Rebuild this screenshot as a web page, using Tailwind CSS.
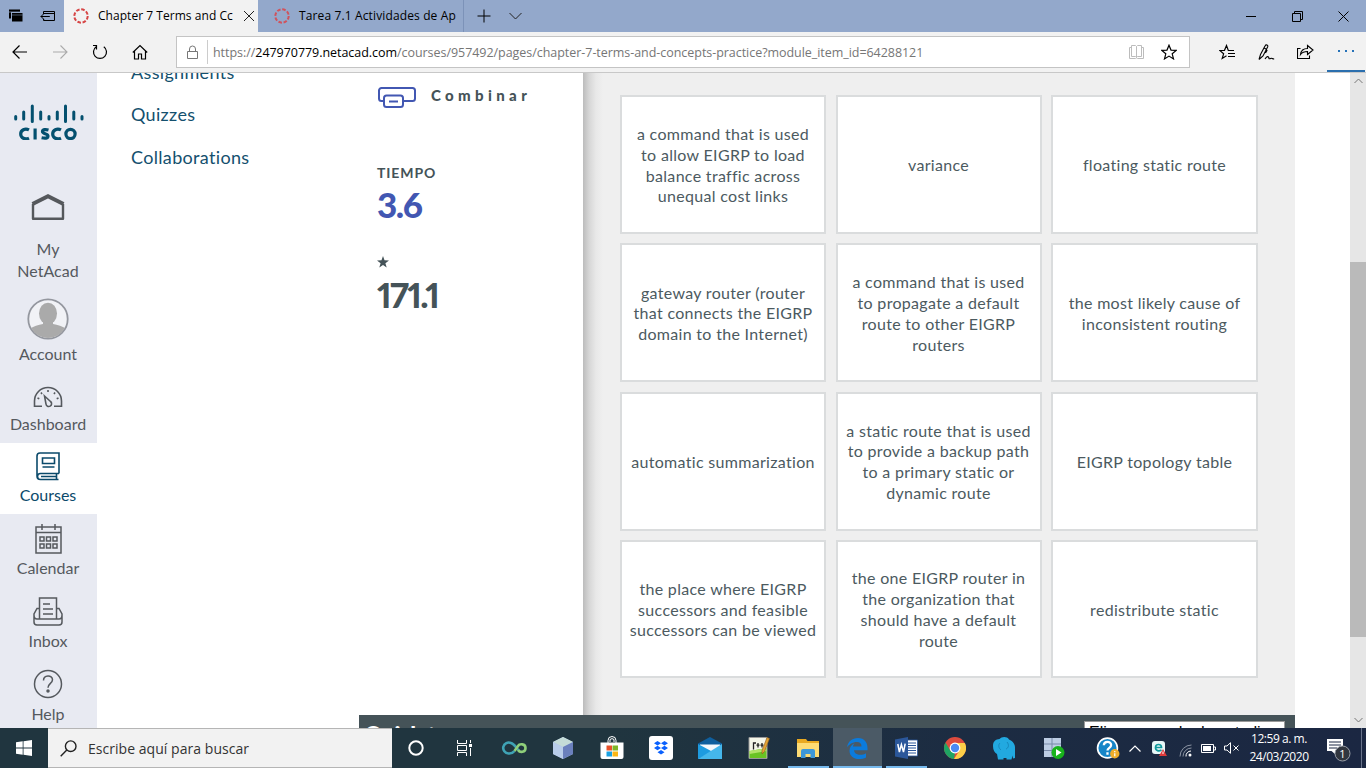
<!DOCTYPE html>
<html lang="es">
<head>
<meta charset="utf-8">
<title>Chapter 7 Terms and Concepts Practice</title>
<script src="https://cdn.jsdelivr.net/npm/@tailwindcss/browser@4"></script>
</head>
<body class="w-[1366px] h-[768px] overflow-hidden flex flex-col bg-white font-['Open_Sans',sans-serif]">

<!-- Tab strip -->
<header class="h-8 shrink-0 flex bg-[#93a8cb] text-xs text-black">
  <div class="w-16 flex items-center shrink-0">
    <svg class="ml-2 w-4 h-4" viewBox="0 0 16 16"><path d="M1 1.500h11v9H1z" fill="#000"/><path d="M1 4h11" stroke="#93a8cb" stroke-width=".7"/><rect x="3.500" y="4.500" width="11.500" height="9.500" fill="#000" stroke="#93a8cb"/><path d="M4 7h10.500" stroke="#93a8cb" stroke-width=".5"/></svg>
    <svg class="ml-4 w-4 h-4" viewBox="0 0 16 16" fill="none" stroke="#000"><path d="M3.500 6V3.500h11v9h-11V11M3.500 5.500h11M.8 8.500h9M4 5.500l-3 3 3 3"/></svg>
  </div>
  <div class="w-[194px] shrink-0 bg-[#f2f2f2] flex items-center">
    <svg class="ml-[9px] w-4 h-4 shrink-0" viewBox="0 0 16 16" fill="none" stroke="#d64545"><circle cx="8" cy="8" r="6.700" stroke-width="2" stroke-dasharray="3.600 1.660"/></svg>
    <span class="ml-[9px] w-[138px] whitespace-nowrap tracking-[0.04px]">Chapter 7 Terms and Cc</span>
    <svg class="ml-[7px] w-3 h-3" viewBox="0 0 12 12" stroke="#222" fill="none"><path d="M1 1l10 10M11 1L1 11"/></svg>
  </div>
  <div class="w-[206px] shrink-0 flex items-center border-r border-[#7c92b8]">
    <svg class="ml-4 w-4 h-4 shrink-0" viewBox="0 0 16 16" fill="none" stroke="#d0525c"><circle cx="8" cy="8" r="6.700" stroke-width="2" stroke-dasharray="3.600 1.660"/></svg>
    <span class="ml-[9px] whitespace-nowrap tracking-[0.13px]">Tarea 7.1 Actividades de Ap</span>
  </div>
  <div class="flex items-center">
    <svg class="ml-[13px] w-[14px] h-[14px]" viewBox="0 0 14 14" stroke="#000"><path d="M7 .5v13M.5 7h13"/></svg>
    <svg class="ml-[18px] w-[13px] h-[8px]" viewBox="0 0 13 8" fill="none" stroke="#222"><path d="M.5 1l6 6 6-6"/></svg>
  </div>
  <div class="ml-auto flex items-center gap-[35px] pr-[17px]">
    <svg class="w-[11px] h-[11px]" viewBox="0 0 11 11" stroke="#000"><path d="M0 5.500h10"/></svg>
    <svg class="w-[11px] h-[11px]" viewBox="0 0 11 11" fill="none" stroke="#000"><path d="M.5 2.500h8v8h-8zM2.500 2.500v-2h8v8h-2"/></svg>
    <svg class="w-[11px] h-[11px]" viewBox="0 0 11 11" stroke="#000"><path d="M.5.5l10 10M10.500.5l-10 10"/></svg>
  </div>
</header>

<!-- Address bar -->
<div class="h-[41px] shrink-0 flex items-center bg-[#f2f2f2] border-b border-[#c8c8c8]">
  <svg class="ml-3 w-4 h-4" viewBox="0 0 16 16" fill="none" stroke="#000" stroke-width="1.200"><path d="M15 8H1M7.500 1.500L1 8l6.500 6.500"/></svg>
  <svg class="ml-6 w-4 h-4" viewBox="0 0 16 16" fill="none" stroke="#aaa" stroke-width="1.100"><path d="M1 8h14M8.500 1.500L15 8l-6.500 6.500"/></svg>
  <svg class="ml-6 w-4 h-4 overflow-visible" viewBox="0 0 16 16" fill="none" stroke="#000" stroke-width="1.200"><path d="M4.200 2.700a6.500 6.500 0 1 0 7.600 0M4.500 5.500V1.500H1"/></svg>
  <svg class="ml-6 w-4 h-4" viewBox="0 0 16 16" fill="none" stroke="#000" stroke-width="1.200"><path d="M.8 8.500L8 1.500l7.200 7M2.500 7v8h4v-5h3v5h4V7"/></svg>
  <div class="ml-7 w-[1014px] h-[32px] shrink-0 bg-white border border-[#c4c4c4] flex items-center">
    <svg class="ml-[10px] w-[11px] h-[14px]" viewBox="0 0 11 14" fill="none" stroke="#777"><path d="M.5 6.500h10v7H.5zM2.500 6.500V4a3 3 0 0 1 6 0v2.500"/></svg>
    <span class="ml-[9px] w-px h-6 bg-[#ccc]"></span>
    <span class="ml-[5px] pt-[2px] text-[12.500px] whitespace-nowrap text-[#767676] tracking-[-0.045px]">https://<span class="text-black">247970779.netacad.com</span>/courses/957492/pages/chapter-7-terms-and-concepts-practice?module_item_id=64288121</span>
    <svg class="ml-auto w-[15px] h-[14px]" viewBox="0 0 15 14" fill="none" stroke="#bcbcbc"><path d="M2.500.5h4l1 1 1-1h4v11h-4l-1 1-1-1h-4zM7.500 1.500v11M2.500 2.500h-2v11h6l1-.6 1 .6h6v-11h-2"/></svg>
    <svg class="ml-[17px] mr-3 w-4 h-4" viewBox="0 0 16 16" fill="none" stroke="#000" stroke-width="1.200"><path d="M8 1.200l2 4.900 5.200.3-4 3.400 1.300 5.100L8 12.100l-4.500 2.800 1.300-5.100-4-3.400 5.200-.3z"/></svg>
  </div>
  <svg class="ml-[29px] w-4 h-4" viewBox="0 0 16 16" fill="none" stroke="#000" stroke-width="1.200"><path d="M15 6.500H9.300L7.500 1.500 5.500 6.300.8 6.500l3.800 3.300L3.200 14.500l4.300-2.700M9 9.500h7M9 12.500h7"/></svg>
  <svg class="ml-[23px] w-[17px] h-[17px]" viewBox="0 0 17 17" fill="none" stroke="#000" stroke-width="1.100"><path d="M1 15.500l1.500-5L7 2c1-2 3.500-1 2.600 1L5 12l-4 3.500M6 4l2 1M8 5l1 1.500L7.500 9M7 15c2-3 3.500-3 3.800-1 .4 1.500 1.600.5 2.400.2 1-.2 1 .8 3 .8"/></svg>
  <svg class="ml-[22px] w-[17px] h-4" viewBox="0 0 17 16" fill="none" stroke="#000" stroke-width="1.100"><path d="M3.500 4.500h-3v10h12v-3M3.500 10.500C4 6.500 6.500 4.500 10.500 4.500v-3L16 6l-5.500 4.500v-3c-3.500 0-5.500 1-7 3z"/></svg>
  <div class="ml-auto mr-px w-[38px] h-[39px] border-b-2 border-[#2b6fae] flex items-center justify-center gap-[5px]"><i class="w-[2px] h-[2px] bg-[#2672b8]"></i><i class="w-[2px] h-[2px] bg-[#2672b8]"></i><i class="w-[2px] h-[2px] bg-[#2672b8]"></i></div>
</div>

<!-- Page -->
<main class="h-[655px] shrink-0 flex overflow-hidden">
  <nav class="w-[97px] shrink-0 pr-px bg-[#e8eaf2] font-['Lato',sans-serif] text-base leading-[22px] text-[#55595e] text-center flex flex-col">
    <div class="h-[114px] pt-[31px] pl-[2px] flex flex-col items-center">
      <svg class="w-[70px] h-9" viewBox="0 0 70 36"><g stroke="#04506f" stroke-width="3" stroke-linecap="round"><path d="M1.700 12.500v2.500M9.700 8v7M18.300 2v15.500M26.700 8v7M35 12.500v2.500M43.300 8v7M51.500 2v15.500M59.800 8v7M68 12.500v2.500"/></g><g fill="none" stroke="#04506f" stroke-width="3.200"><path d="M15 25.900c-4-2-8.300.2-8.300 4.100s4.300 6 8.300 4.100M21.100 24.500v11M34.500 26c-3-.8-6-.6-6 1.600 0 2.600 5.500 1.500 5.500 4.500 0 2.400-3 2.400-6.400 1.700M47 25.900c-4-2-8.300.2-8.300 4.100s4.300 6 8.300 4.100"/><circle cx="56.500" cy="30" r="4.600"/></g></svg>
    </div>
    <div class="h-[104px] pt-[6px] flex flex-col items-center">
      <svg class="w-[34px] h-7" viewBox="0 0 34 28" fill="none" stroke="#55585c"><path d="M2 11v14.800h30V11" stroke-width="2.400" stroke-linejoin="round"/><path d="M1.500 11L17 3.200 32.500 11" stroke-width="4"/></svg>
      <span class="mt-[17px] block">My<br>NetAcad</span>
    </div>
    <div class="h-[82px] pt-[7px] flex flex-col items-center">
      <svg class="w-[42px] h-[42px] shrink-0" viewBox="0 0 42 42"><defs><clipPath id="av"><circle cx="21" cy="21" r="19"/></clipPath></defs><circle cx="21" cy="21" r="19.700" fill="#f1f2f6" stroke="#94979f" stroke-width="1.800"/><g clip-path="url(#av)" fill="#aaa"><ellipse cx="21" cy="15.500" rx="9" ry="10.800"/><path d="M16 23h10v3c5 1 10 2 15 6v9H1v-9c5-4 10-5 15-6z"/></g></svg>
      <span class="mt-[3px] block">Account</span>
    </div>
    <div class="h-[70px] pt-[13px] flex flex-col items-center">
      <svg class="w-[30px] h-[22px]" viewBox="0 0 30 22" fill="none" stroke="#55595e" stroke-width="1.600"><path d="M9 20.300H1.500V15a13.500 13.500 0 0 1 27 0v5.300H21M11.500 10l6 5.500a2.800 2.800 0 1 1-4.500 2.500zM15 4v2M8 6.500l1 1.500M22 6.500L21 8M4.500 12l1.800.8M25.500 12l-1.800.8"/></svg>
      <span class="mt-[5px] block">Dashboard</span>
    </div>
    <div class="h-[71px] -mr-px pr-px pt-[9px] bg-white text-[#0b4a6b] flex flex-col items-center">
      <svg class="w-6 h-[29px]" viewBox="0 0 24 29" fill="none" stroke="#0b4a6b" stroke-width="1.600"><path d="M23 21.500V1H4C2 1 1 2 1 4v20c0 2.500 1.500 3.500 3.500 3.500h18M23 21.500H4.500c-4 0-4 6 0 6M20.500 21.500v6M5 24.500h15M6.500 6h12v5.500h-12zM6.500 15h12"/></svg>
      <span class="mt-[3px] block">Courses</span>
    </div>
    <div class="h-[73px] pt-[10px] flex flex-col items-center">
      <svg class="w-[27px] h-[30px]" viewBox="0 0 27 30" fill="none" stroke="#55595e" stroke-width="1.500"><path d="M1 3h25v26H1zM1 8.500h25M7 0v6M20 0v6M5 13h4v4H5zM11.500 13h4v4h-4zM18 13h4v4h-4zM5 20h4v4H5zM11.500 20h4v4h-4zM18 20h4v4h-4z"/></svg>
      <span class="mt-[3px] block">Calendar</span>
    </div>
    <div class="h-[73px] pt-[10px] flex flex-col items-center">
      <svg class="w-[30px] h-[29px]" viewBox="0 0 30 29" fill="none" stroke="#55595e" stroke-width="1.500"><path d="M6.500 22V1h17v21M10 7h7M10 12h10M10 17h10M6.500 11.500H4L1 17v8c0 2 1 3 3 3h22c2 0 3-1 3-3v-8l-3-5.500h-2.500M1 18c0 3 1 4 3 4h22c2 0 3-1 3-4"/></svg>
      <span class="mt-[4px] block">Inbox</span>
    </div>
    <div class="h-[68px] pt-[9px] flex flex-col items-center">
      <svg class="w-[30px] h-[30px]" viewBox="0 0 30 30" fill="none" stroke="#55595e" stroke-width="1.500"><circle cx="15" cy="15" r="13.500"/><path d="M10.500 11.500c0-6 9-6 9-.7 0 3.700-4.500 3.500-4.500 8"/><circle cx="15" cy="22" r="1" fill="#55595e"/></svg>
      <span class="mt-[4px] block">Help</span>
    </div>
  </nav>

  <aside class="w-[262px] shrink-0 pl-[34px] font-['Lato',sans-serif] text-lg leading-[43px] tracking-[0.33px] text-[#14506e] flex flex-col">
    <a class="-mt-[22px] h-[42px]">Assignments</a>
    <a>Quizzes</a>
    <a>Collaborations</a>
  </aside>

  <section class="w-[936px] shrink-0 flex flex-col">
    <div class="h-[642px] flex">
      <div class="w-[224px] shrink-0 pl-[18px] pt-[12px] font-['Lato',sans-serif] text-[#455358]">
        <div class="flex items-center h-5">
          <svg class="mt-[4px] w-[39px] h-[24px]" viewBox="0 0 39 24" fill="none" stroke="#4257b2" stroke-width="2"><path d="M6 16H4.500A2.500 2.500 0 0 1 2 13.500v-8A2.500 2.500 0 0 1 4.500 3h31A2.500 2.500 0 0 1 38 5.500v8a2.500 2.500 0 0 1-2.500 2.500H27"/><rect x="7" y="10.500" width="19" height="11.500" rx="2.500"/><path d="M12 16.500h9"/></svg>
          <span class="ml-[15px] text-[15px] font-black tracking-[4.350px]">Combinar</span>
        </div>
        <div class="mt-[58px] text-sm leading-[20px] font-bold tracking-[0.900px]">TIEMPO</div>
        <div class="text-[35px] leading-[42px] font-black text-[#4257b2] tracking-[-1.500px]">3.6</div>
        <svg class="mt-[31px] w-3 h-3" viewBox="0 0 12 12" fill="#455358"><path d="M6 0l1.500 4.200L12 4.400 8.400 7.200 9.700 11.500 6 9 2.300 11.500l1.300-4.300L0 4.400l4.500-.2z"/></svg>
        <div class="mt-[5px] text-[35px] leading-[42px] font-black proportional-nums tracking-[-1.700px]">171.1</div>
      </div>
      <div class="w-[712px] shrink-0 bg-[#efefef] bg-[linear-gradient(90deg,#bcbcbc_0px,#d6d6d6_6px,#e8e8e8_13px,#efefef_20px)] pl-[37px] pt-[22px]">
        <div class="w-[638px] h-[583px] grid grid-cols-[206px_206px_207px] grid-rows-[139px_139px_139px_138px] gap-x-[9.500px] gap-y-[9.330px] font-['Lato',sans-serif] text-[16px] leading-[20.800px] tracking-[0.31px] text-[#4c5a5f] text-center whitespace-nowrap [&>div]:bg-white [&>div]:border-2 [&>div]:border-[#dadcdd] [&>div]:flex [&>div]:items-center [&>div]:justify-center [&>div]:pt-[2px]">
          <div>a command that is used<br>to allow EIGRP to load<br>balance traffic across<br>unequal cost links</div>
          <div>variance</div>
          <div>floating static route</div>
          <div>gateway router (router<br>that connects the EIGRP<br>domain to the Internet)</div>
          <div>a command that is used<br>to propagate a default<br>route to other EIGRP<br>routers</div>
          <div>the most likely cause of<br>inconsistent routing</div>
          <div>automatic summarization</div>
          <div>a static route that is used<br>to provide a backup path<br>to a primary static or<br>dynamic route</div>
          <div>EIGRP topology table</div>
          <div>the place where EIGRP<br>successors and feasible<br>successors can be viewed</div>
          <div>the one EIGRP router in<br>the organization that<br>should have a default<br>route</div>
          <div>redistribute static</div>
        </div>
      </div>
    </div>
    <div class="h-[13px] bg-[#455358] flex justify-between overflow-hidden pl-[5px] pr-[10px]">
      <span class="mt-[5px] font-['Lato',sans-serif] font-black text-[23px] leading-[28px] tracking-[-0.5px] text-white">Quizlet</span>
      <div class="mt-[6px] w-[201px] h-7 pl-[4px] bg-white border border-[#999] font-['Liberation_Sans',sans-serif] text-base leading-[22px] text-black whitespace-nowrap">Elige un modo de estudio</div>
    </div>
  </section>

  <div class="w-[55px] shrink-0"></div>
  <div class="w-4 shrink-0 bg-[#e6e6e6] flex flex-col items-center justify-between py-[5px]">
    <svg class="w-[9px] h-[6px]" viewBox="0 0 9 6" fill="none" stroke="#777"><path d="M.5 5l4-4 4 4"/></svg>
    <div class="mt-[98px] w-4 h-[375px] bg-[#bababa]"></div>
    <svg class="w-[9px] h-[6px]" viewBox="0 0 9 6" fill="none" stroke="#777"><path d="M.5 1l4 4 4-4"/></svg>
  </div>
</main>

<!-- Taskbar -->
<footer class="h-10 shrink-0 flex bg-[linear-gradient(90deg,#20353f_0%,#20353f_45%,#1c2c42_70%,#1b2742_100%)] text-white">
  <div class="w-12 shrink-0 flex items-center justify-center">
    <svg class="w-4 h-4" viewBox="0 0 16 16" fill="#fff"><path d="M0 2.300l6.700-1v6.300H0zM7.500 1.200L16 0v7.600H7.500zM0 8.400h6.700v6.300L0 13.700zM7.500 8.400H16V16l-8.500-1.200z"/></svg>
  </div>
  <div class="w-[344px] shrink-0 bg-[#f2f2f2] border-y border-[#b5b5b5] flex items-center">
    <svg class="ml-3 w-[17px] h-[17px]" viewBox="0 0 17 17" fill="none" stroke="#222" stroke-width="1.400"><circle cx="10.700" cy="6.200" r="5.300"/><path d="M6.800 10L.7 16.200"/></svg>
    <span class="ml-[11px] pt-px text-sm text-[#333] whitespace-nowrap tracking-[0.04px]">Escribe aquí para buscar</span>
  </div>
  <div class="-ml-px flex [&>div]:w-[49.100px] [&>div]:h-10 [&>div]:flex [&>div]:items-center [&>div]:justify-center">
    <div><svg class="w-4 h-4" viewBox="0 0 16 16"><circle cx="8" cy="8" r="6.700" fill="none" stroke="#fff" stroke-width="2"/></svg></div>
    <div><svg class="w-[17px] h-4" viewBox="0 0 17 16" fill="none" stroke="#fff"><path d="M1.500 0v3.500h9V0M1.500 5.500h9v5h-9zM1.500 16v-3.500h9V16M14.500 0v3M14.500 8v8"/><path d="M13 4h3v3h-3z" fill="#fff" stroke="none"/></svg></div>
    <div><svg class="w-[26px] h-[14px]" viewBox="0 0 26 14" fill="none" stroke-width="2.600"><path d="M13.500 10C11.500 12.500 9.500 12.700 7.500 12.500A5.500 5.500 0 1 1 10 2c3.500.8 5 5 8 7.500" stroke="#3fa3b5"/><path d="M17 9c2 3 7.500 2.500 7.500-2S18.500 2.500 17 5l-3.500 5" stroke="#8fcf7a"/></svg></div>
    <div><svg class="w-[22px] h-[22px]" viewBox="0 0 22 22"><path d="M11 0l10 5v12l-10 5-10-5V5z" fill="#aebfe2"/><path d="M11 0l10 5-10 5L1 5z" fill="#c5dcd8"/><path d="M11 10l10-5v12l-10 5z" fill="#6b80bd"/><path d="M1 5l10 5v12L1 17z" fill="#b9cdea"/></svg></div>
    <div><svg class="w-6 h-6" viewBox="0 0 24 24"><path d="M.5 6.500h23V21a2 2 0 0 1-2 2h-19a2 2 0 0 1-2-2z" fill="#fff"/><path d="M8 7V4.500a4 4 0 0 1 8 0V7M10 6V3.500a3 3 0 0 1 4 0V6" fill="none" stroke="#fff"/><path d="M6.500 9.500H12v5H6.500z" fill="#e8512a"/><path d="M12.500 9.500H18v5h-5.500z" fill="#7fb528"/><path d="M6.500 15.500H12v5H6.500z" fill="#1aa1e2"/><path d="M12.500 15.500H18v5h-5.500z" fill="#fbb615"/></svg></div>
    <div><svg class="w-6 h-6" viewBox="0 0 24 24"><rect width="24" height="24" rx="3" fill="#fff"/><path d="M8.500 5L12 7.300 8.500 9.600 5 7.300zM15.500 5L19 7.300l-3.500 2.300L12 7.300zM8.500 9.800L12 12l-3.500 2.300L5 12zM15.500 9.800L19 12l-3.500 2.300L12 12zM12 14l3.500 2.300L12 18.600l-3.500-2.300z" fill="#0a61fe"/></svg></div>
    <div><svg class="w-6 h-[22px]" viewBox="0 0 24 22"><path d="M0 6.500L12 0l12 6.500V22H0z" fill="#0f5f9e"/><path d="M2 7.500h20V15L12 20 2 14z" fill="#f4f8fc"/><path d="M0 7l14 7.500L0 22z" fill="#1d9be0"/><path d="M24 7v15H0z" fill="#45b7ec"/></svg></div>
    <div><svg class="w-6 h-6" viewBox="0 0 24 24"><path d="M2 1.500h18v21H2z" fill="#f4f6e8" stroke="#999"/><path d="M2.500 15l17-3v10h-17z" fill="#69c324"/><path d="M2.500 15l17-3v3l-17 3z" fill="#b3e36b"/><path d="M6.500 13.500V7H9M11 7v4.500M9.500 9.200h3M15 7v4.500M13.500 9.200h3" stroke="#222" fill="none" stroke-width="1.300"/><path d="M20 1.500l2.500 1-5 13-2.500 2.500v-3.500z" fill="#e3a335" stroke="#8b5c1d" stroke-width=".6"/></svg></div>
    <div class="border-b-2 border-[#76b9ed] pt-[2px] mx-1 w-[41px]!"><svg class="w-[22px] h-[19px]" viewBox="0 0 22 19"><path d="M0 0h9l1.500 2H22v16H0z" fill="#e9a921"/><path d="M0 4h22v14H0z" fill="#fddb74"/><path d="M4 19v-7a2 2 0 0 1 2-2h10a2 2 0 0 1 2 2v7h-4.500v-4h-5v4z" fill="#3d97d8"/></svg></div>
    <div class="border-b-2 border-[#76b9ed] bg-[#4b5a66] pt-[2px]"><svg class="w-[21px] h-[21px]" viewBox="0 0 21 21"><path d="M0 9.500C1 3.500 5 0 11 0c6.500 0 9.500 4.500 9.500 10v2.300H7c.3 3 3 4.500 6 4.500 2.500 0 4.500-.7 6-1.600v4.200c-2 1.100-4.500 1.600-7 1.600-5.500 0-9.500-3.300-9.500-8.300 0-3.400 2-6.200 5-7.500-1 1.200-1.400 2.400-1.500 3.400h8.500c0-3-1.500-4.500-4.500-4.500-4.500 0-8 2.500-10 5.400z" fill="#0b7bdc"/></svg></div>
    <div class="border-b-2 border-[#76b9ed] pt-[2px] mx-1 w-[41px]!"><svg class="w-[23px] h-[22px]" viewBox="0 0 23 22"><path d="M11 3h11.500v16H11z" fill="#fff" stroke="#2b579a" stroke-width=".8"/><path d="M13 6h8M13 8.500h8M13 11h8M13 13.500h8M13 16h8" stroke="#2b579a"/><path d="M0 2.500L13 0v22L0 19.500z" fill="#2b579a"/><path d="M2.800 7l1.600 8 2-7.500L8.500 15l1.700-8.300" fill="none" stroke="#fff" stroke-width="1.500"/></svg></div>
    <div><svg class="w-[22px] h-[22px]" viewBox="0 0 22 22"><circle cx="11" cy="11" r="11" fill="#dd4b3e"/><path d="M1.500 5.500L6.500 14 11 16l-1 6A11 11 0 0 1 1.500 5.500z" fill="#1fa463"/><path d="M11 6h9.800A11 11 0 0 1 10 22l5.500-8.500z" fill="#fdcf48"/><circle cx="11" cy="11" r="5.400" fill="#fff"/><circle cx="11" cy="11" r="4.200" fill="#4a8af4"/></svg></div>
    <div><svg class="w-6 h-6" viewBox="0 0 24 24" fill="#22a9e0"><path d="M1 10C1 5 4 3.500 7.500 3 9.500.5 15 0 17 3.500 21 5 23.500 8.500 23 13v9l-2 .5-.5-3-1 4h-5V22h-3v1.500H6L5 18c-2.500-1.500-4-4-4-8z"/><path d="M8 7c-2 2-1.500 5 1 7M15 6c2.500 3 1.500 6-1 7" fill="none" stroke="#1687bb"/></svg></div>
    <div><svg class="w-[22px] h-[22px]" viewBox="0 0 22 22"><path d="M1 1h17v19H1z" fill="#bccce3"/><path d="M1 7h17M1 13.500h17M9 1v19" stroke="#7889a8"/><circle cx="15" cy="15.500" r="6.500" fill="#18b31b"/><path d="M13 12l5.500 3.500L13 19z" fill="#fff"/></svg></div>
  </div>
  <div class="ml-auto flex items-center shrink-0">
    <svg class="w-[24px] h-[23px]" viewBox="0 0 23 22"><circle cx="11" cy="10.500" r="9.500" fill="#1685c7" stroke="#fff" stroke-width="1.600"/><path d="M7.500 8c0-4.500 7-4.500 7-.3 0 2.800-3.500 2.500-3.500 5.300M11 14.700v2.300" fill="none" stroke="#fff" stroke-width="2.200"/><circle cx="18" cy="16" r="4.500" fill="#f0ad29"/><path d="M18 13.500v1M18 15.500v3" stroke="#fff" stroke-width="1.200"/></svg>
    <svg class="ml-[9px] w-3 h-[7px]" viewBox="0 0 12 7" fill="none" stroke="#fff" stroke-width="1.200"><path d="M.5 6.500L6 1l5.500 5.500"/></svg>
    <svg class="ml-[11px] w-[15px] h-[15px]" viewBox="0 0 15 15"><rect width="13" height="13" rx="3" fill="#e8f7f7"/><path d="M3.500 6.500h6c0-4-6-4-6 0 0 3.500 3.500 4 6 2.500" fill="none" stroke="#109a9d" stroke-width="1.700"/><path d="M11 8l4 7H7z" fill="#dd3a3a"/><path d="M11 10.500v2.500" stroke="#fff"/></svg>
    <svg class="ml-[12px] mt-1 w-[13px] h-[13px]" viewBox="0 0 13 13" fill="none" stroke="#fff"><circle cx="11" cy="11" r="1.500" fill="#fff" stroke="none"/><path d="M7 12.500A5 5 0 0 1 12 7"/><path d="M4 12.500A8.500 8.500 0 0 1 12.500 4M1 12.500A11.500 11.500 0 0 1 12.500 1" stroke="#8d95a4"/></svg>
    <svg class="ml-[9px] w-[15px] h-[9px]" viewBox="0 0 15 9"><path d="M.5.500h12v8H.5zM13 3h1.500v3H13" fill="none" stroke="#fff"/><path d="M2 2h8v5H2z" fill="#fff"/></svg>
    <svg class="ml-[8px] w-[15px] h-3" viewBox="0 0 15 12" fill="none" stroke="#fff"><path d="M.5 4H3l3.500-3.300v10.600L3 8H.5zM9.500 3.500l5 5M14.500 3.500l-5 5"/></svg>
    <div class="ml-[8px] w-[64px] text-xs leading-[18px] text-center whitespace-nowrap tracking-[-0.45px]">12:59 a. m.<br>24/03/2020</div>
    <svg class="ml-[15px] mt-[3px] w-[25px] h-6" viewBox="0 0 25 24"><path d="M1 1h16v12H9v3l-3.500-3H1z" fill="#fff"/><path d="M3 4h12M3 7h12M3 10h8" stroke="#1b2742"/><circle cx="16.500" cy="15.500" r="7.500" fill="#31363f" stroke="#9a9fa8"/><text x="16.500" y="19.500" text-anchor="middle" font-family="Open Sans, sans-serif" font-size="11" fill="#fff">1</text></svg>
    <span class="ml-[10px] mr-1 w-px h-10 bg-[#69738a]"></span>
  </div>
</footer>
</body>
</html>
